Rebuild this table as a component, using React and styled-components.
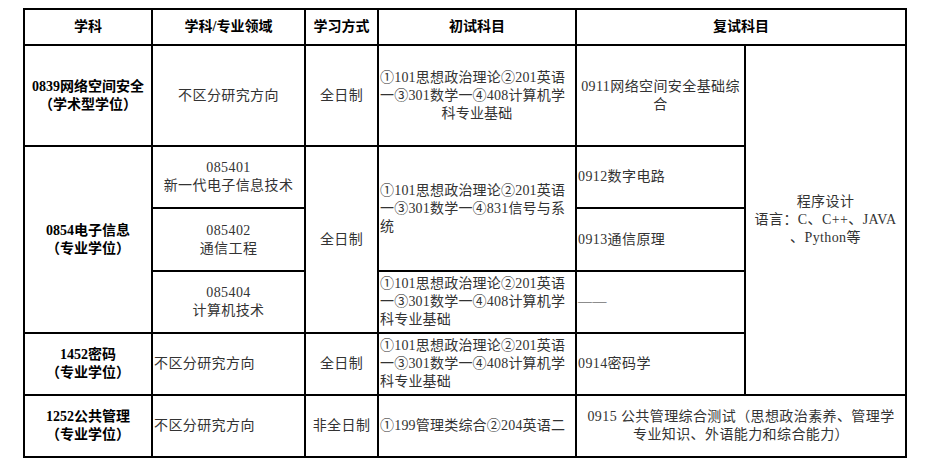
import React from "react";
import styled, { createGlobalStyle } from "styled-components";

const GlobalStyle = createGlobalStyle`
  html, body {
    margin: 0;
    padding: 0;
    background: #fff;
  }
  body {
    font-family: "Liberation Serif", "Noto Sans CJK SC", serif;
    color: #333;
  }
`;

const Page = styled.div`
  padding: 8px 0 0 23px;
`;

const Table = styled.table`
  border-collapse: collapse;
  table-layout: fixed;
  width: 882px;
  font-size: 14px;
  line-height: 18px;
`;

const HeadCell = styled.th`
  border: 2px solid #000;
  height: 34px;
  padding: 0;
  font-weight: bold;
  color: #000;
  font-size: 14px;
  text-align: center;
  vertical-align: middle;
`;

const Cell = styled.td`
  border: 2px solid #000;
  height: ${(p) => p.$h || 60}px;
  padding: 0 1px;
  text-align: ${(p) => p.$align || "center"};
  vertical-align: middle;
  letter-spacing: ${(p) => (p.$bold ? "0" : p.$tight ? "0.2px" : "0.4px")};
  font-weight: ${(p) => (p.$bold ? "bold" : "normal")};
  color: ${(p) => (p.$bold ? "#000" : "#333")};
  white-space: nowrap;
`;

const Line = styled.div`
  text-align: ${(p) => p.$align || "inherit"};
`;

const Lines = ({ items, align }) => (
  <>
    {items.map((t, i) => (
      <Line key={i} $align={align}>
        {t}
      </Line>
    ))}
  </>
);

const exam408 = [
  "①101思想政治理论②201英语",
  "一③301数学一④408计算机学",
  "科专业基础",
];

export default function App() {
  return (
    <Page>
      <GlobalStyle />
      <Table>
        <colgroup>
          <col style={{ width: 128 }} />
          <col style={{ width: 153 }} />
          <col style={{ width: 73 }} />
          <col style={{ width: 198 }} />
          <col style={{ width: 169 }} />
          <col style={{ width: 161 }} />
        </colgroup>
        <thead>
          <tr>
            <HeadCell>学科</HeadCell>
            <HeadCell>学科/专业领域</HeadCell>
            <HeadCell>学习方式</HeadCell>
            <HeadCell>初试科目</HeadCell>
            <HeadCell colSpan={2}>复试科目</HeadCell>
          </tr>
        </thead>
        <tbody>
          <tr>
            <Cell $bold $h={99}>
              <Lines items={["0839网络空间安全", "（学术型学位）"]} />
            </Cell>
            <Cell $h={99}>不区分研究方向</Cell>
            <Cell $h={99}>全日制</Cell>
            <Cell $h={99} $tight>
              <Lines items={exam408.slice(0, 2)} align="left" />
              <Line $align="center">科专业基础</Line>
            </Cell>
            <Cell $h={99}>
              <Lines items={["0911网络空间安全基础综", "合"]} />
            </Cell>
            <Cell rowSpan={5}>
              <Lines items={["程序设计", "语言：C、C++、JAVA", "、Python等"]} />
            </Cell>
          </tr>
          <tr>
            <Cell $bold rowSpan={3}>
              <Lines items={["0854电子信息", "（专业学位）"]} />
            </Cell>
            <Cell $h={60}>
              <Lines items={["085401", "新一代电子信息技术"]} />
            </Cell>
            <Cell rowSpan={3}>全日制</Cell>
            <Cell rowSpan={2} $align="left" $tight>
              <Lines
                items={[
                  "①101思想政治理论②201英语",
                  "一③301数学一④831信号与系",
                  "统",
                ]}
              />
            </Cell>
            <Cell $align="left" $h={60}>
              0912数字电路
            </Cell>
          </tr>
          <tr>
            <Cell $h={61}>
              <Lines items={["085402", "通信工程"]} />
            </Cell>
            <Cell $align="left" $h={61}>
              0913通信原理
            </Cell>
          </tr>
          <tr>
            <Cell $h={60}>
              <Lines items={["085404", "计算机技术"]} />
            </Cell>
            <Cell $align="left" $h={60} $tight>
              <Lines items={exam408} />
            </Cell>
            <Cell $align="left" $h={60}>
              ——
            </Cell>
          </tr>
          <tr>
            <Cell $bold $h={60}>
              <Lines items={["1452密码", "（专业学位）"]} />
            </Cell>
            <Cell $align="left" $h={60}>
              不区分研究方向
            </Cell>
            <Cell $h={60}>全日制</Cell>
            <Cell $align="left" $h={60} $tight>
              <Lines items={exam408} />
            </Cell>
            <Cell $align="left" $h={60}>
              0914密码学
            </Cell>
          </tr>
          <tr>
            <Cell $bold $h={60}>
              <Lines items={["1252公共管理", "（专业学位）"]} />
            </Cell>
            <Cell $align="left" $h={60}>
              不区分研究方向
            </Cell>
            <Cell $h={60}>非全日制</Cell>
            <Cell $align="left" $h={60} $tight>
              ①199管理类综合②204英语二
            </Cell>
            <Cell colSpan={2} $h={60}>
              <Lines
                items={[
                  "0915 公共管理综合测试（思想政治素养、管理学",
                  "专业知识、外语能力和综合能力）",
                ]}
              />
            </Cell>
          </tr>
        </tbody>
      </Table>
    </Page>
  );
}
